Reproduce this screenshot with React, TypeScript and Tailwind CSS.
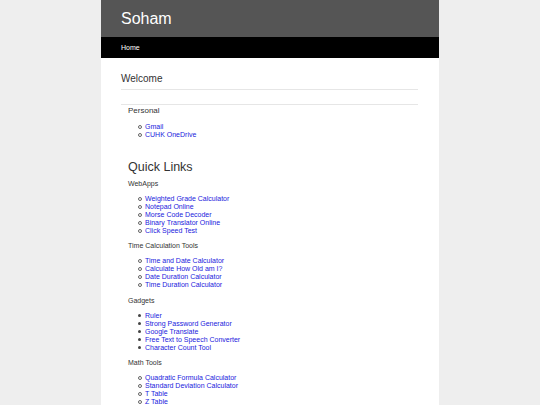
const groups = [
  {
    title: 'WebApps',
    filled: false,
    links: [
      'Weighted Grade Calculator',
      'Notepad Online',
      'Morse Code Decoder',
      'Binary Translator Online',
      'Click Speed Test',
    ],
  },
  {
    title: 'Time Calculation Tools',
    filled: false,
    links: [
      'Time and Date Calculator',
      'Calculate How Old am I?',
      'Date Duration Calculator',
      'Time Duration Calculator',
    ],
  },
  {
    title: 'Gadgets',
    filled: true,
    links: [
      'Ruler',
      'Strong Password Generator',
      'Google Translate',
      'Free Text to Speech Converter',
      'Character Count Tool',
    ],
  },
  {
    title: 'Math Tools',
    filled: false,
    links: [
      'Quadratic Formula Calculator',
      'Standard Deviation Calculator',
      'T Table',
      'Z Table',
    ],
  },
];

function LinkList({ links, filled }: { links: string[]; filled?: boolean }) {
  return (
    <ul className="pl-[10px] text-[7px] leading-[8px]">
      {links.map((l) => (
        <li key={l} className="flex items-center">
          <span
            className={
              filled
                ? 'w-[3px] h-[3px] rounded-full bg-[#444444]'
                : 'w-[4px] h-[4px] rounded-full border-[0.8px] border-[#666666]'
            }
          />
          <a className={`${filled ? 'ml-[4px]' : 'ml-[3px]'} text-[#2222dd]`}>{l}</a>
        </li>
      ))}
    </ul>
  );
}

export default function App() {
  return (
    <div className="min-h-screen bg-[#eeeeee] font-['Liberation_Sans',Arial,sans-serif]">
      <div className="mx-auto w-[338px] min-h-screen bg-white overflow-hidden">
        <header className="h-[37px] bg-[#555555] pl-[20px] flex items-center">
          <h1 className="text-[16px] leading-none text-white pt-[1px]">Soham</h1>
        </header>
        <nav className="h-[21px] bg-black pl-[20px] flex items-center">
          <a className="text-[7px] leading-[8px] text-white pt-[1px]">Home</a>
        </nav>

        <main className="pl-[20px] pr-[21px]">
          <h2 className="mt-[15px] text-[10px] leading-[12px] text-[#333333]">Welcome</h2>
          <hr className="mt-[4px] border-[#e6e6e6]" />
          <hr className="mt-[13.5px] border-[#e6e6e6]" />

          <section className="pl-[7px]">
            <h3 className="mt-[1.5px] text-[8px] leading-[9px] text-[#333333]">Personal</h3>
            <div className="mt-[7.5px]">
              <LinkList links={['Gmail', 'CUHK OneDrive']} />
            </div>

            <h2 className="mt-[21.5px] text-[12.5px] leading-[14px] text-[#333333]">Quick Links</h2>

            {groups.map((g, i) => (
              <div key={g.title}>
                <p className={`${i === 0 ? 'mt-[5.5px]' : 'mt-[7.5px]'} text-[7px] leading-[8px] text-[#333333]`}>
                  {g.title}
                </p>
                <div className="mt-[7px]">
                  <LinkList links={g.links} filled={g.filled} />
                </div>
              </div>
            ))}
          </section>
        </main>
      </div>
    </div>
  );
}
